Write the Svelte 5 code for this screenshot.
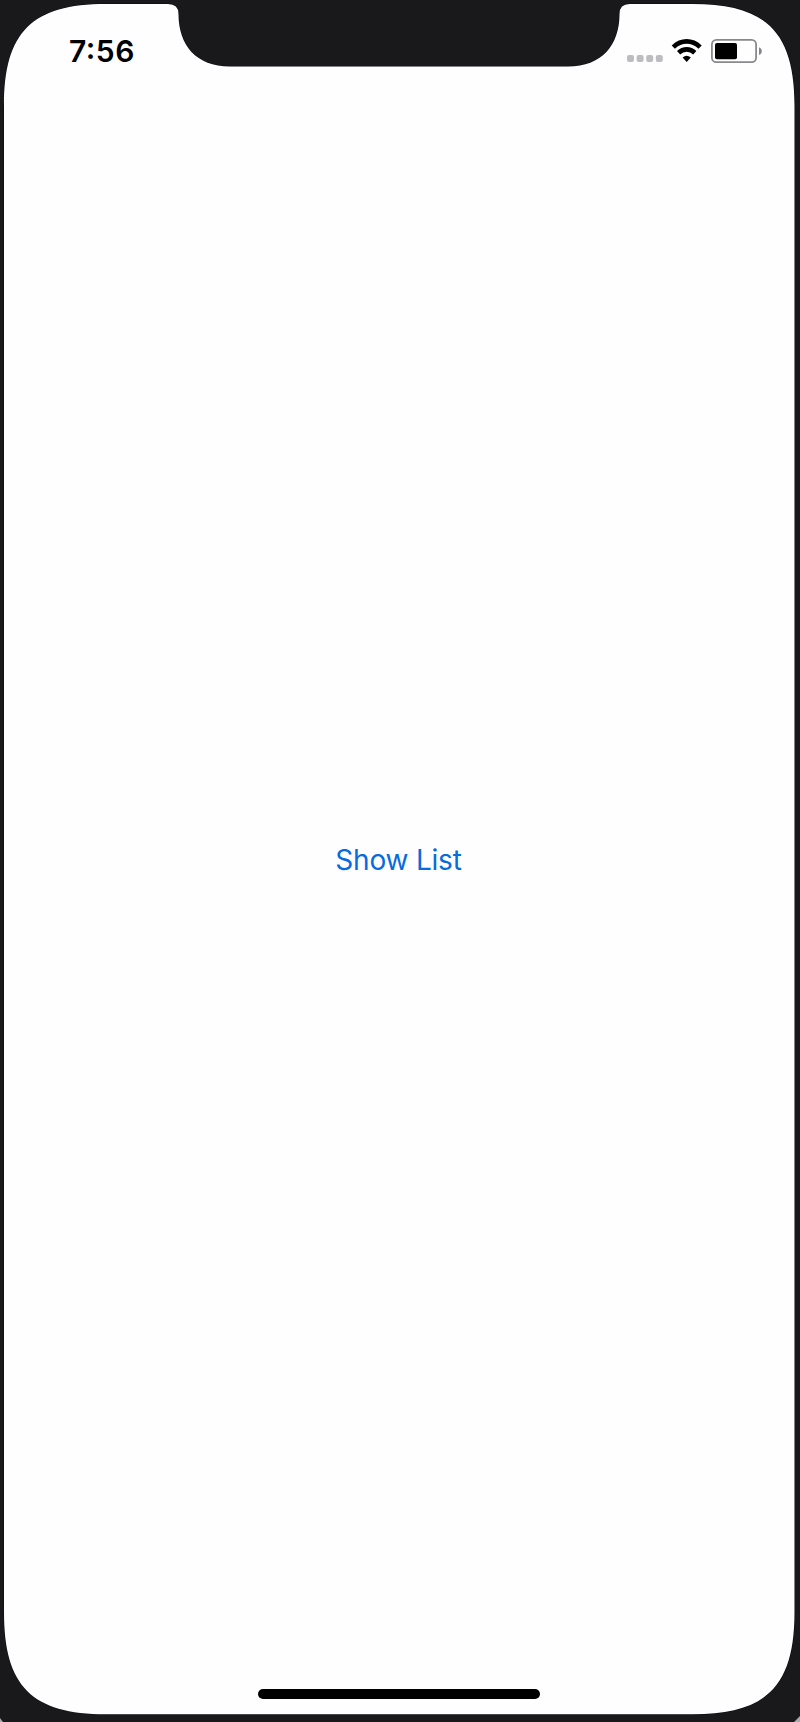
<script>
  let listShown = $state(false);
  const dots = [627, 636.6, 646.2, 655.8];
</script>

<div class="phone">
  <svg class="frame" viewBox="0 0 800 1722" aria-hidden="true">
    <rect width="800" height="1722" fill="#19181b" />
    <path d="M0 1718V1722H3ZM800 1716V1722H794Z" fill="#aaa9ab" />
    <path
      d="M4 106C4 32 32 4 106 4H168Q178.500 4 178.500 14C178.500 45 196 66.500 230 66.500H568C602 66.500 619.500 45 619.500 14Q619.500 4 629.500 4H692.500C766.500 4 794.500 32 794.500 106V1612.300C794.500 1686.300 766.500 1714.300 692.500 1714.300H106C32 1714.300 4 1686.300 4 1612.300Z"
      fill="#fefdff"
      stroke="#09080a"
      stroke-width="1"
      paint-order="stroke"
    />
  </svg>

  <header>
    <time>7:56</time>
    <svg class="status" width="138" height="28" viewBox="626 37 138 28" aria-label="Status">
      {#each dots as x}
        <rect {x} y="55" width="7" height="7" rx="2" fill="#bdbcbe" />
      {/each}
      <g fill="none" stroke="#000" stroke-width="4.600">
        <path d="M673.300 47.100C681.300 39.500 692.100 39.500 700.100 47.100" />
        <path d="M678.600 52.700C683.300 48.300 690.100 48.300 694.800 52.700" />
      </g>
      <path d="M682.600 57.400Q686.700 54.300 690.800 57.400L686.700 62Z" />
      <rect x="711.900" y="39.900" width="44.200" height="22.300" rx="4.500" fill="none" stroke="#89888a" stroke-width="1.800" />
      <rect x="715" y="43" width="22" height="16.300" rx="2" />
      <path d="M759 47.200C762.700 48.500 762.700 53.800 759 55.100Z" fill="#858486" />
    </svg>
  </header>

  <main>
    <button onclick={() => (listShown = !listShown)}>Show List</button>
  </main>

  <footer><div class="home"></div></footer>
</div>

<style>
  :global(body) {
    margin: 0;
    background: #19181b;
  }
  .phone {
    position: relative;
    isolation: isolate;
    display: flex;
    flex-direction: column;
    width: 800px;
    height: 1722px;
    overflow: hidden;
    font-family: Inter, sans-serif;
  }
  .frame {
    position: absolute;
    inset: 0;
    width: 800px;
    height: 1722px;
    z-index: -1;
  }
  header {
    box-sizing: border-box;
    height: 66px;
    padding: 37px 36px 0 69px;
    display: flex;
    justify-content: space-between;
    align-items: flex-start;
  }
  time {
    font-size: 30px;
    font-weight: 600;
    line-height: 29px;
    letter-spacing: 0.5px;
    font-feature-settings: "case", "calt";
    color: #000;
  }
  .status {
    display: block;
  }
  main {
    flex: 1;
    display: flex;
    justify-content: center;
    padding: 774px 3px 0 0;
  }
  button {
    align-self: flex-start;
    padding: 0;
    border: 0;
    background: none;
    font: 400 28px/40px Inter, sans-serif;
    letter-spacing: -0.2px;
    white-space: nowrap;
    color: #086bdc;
  }
  footer {
    display: flex;
    justify-content: center;
    padding: 0 2px 23px 0;
  }
  .home {
    width: 282px;
    height: 10px;
    border-radius: 5px;
    background: #000;
  }
</style>
